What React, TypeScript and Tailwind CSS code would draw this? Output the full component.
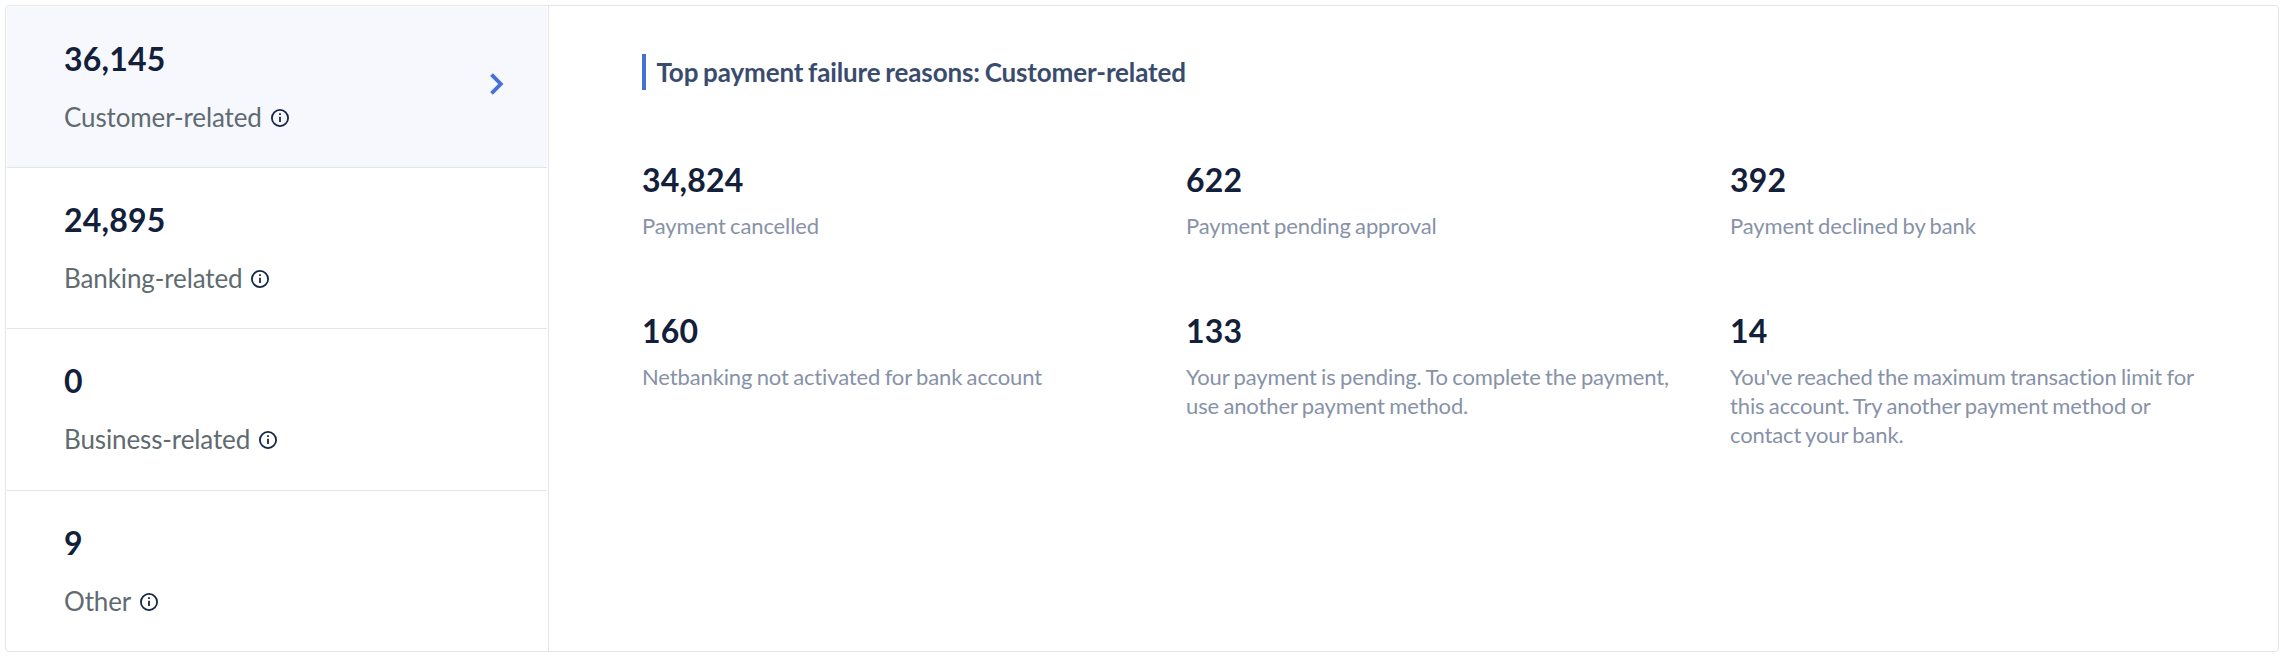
import clsx from "clsx";

type Category = { count: string; label: string; active?: boolean };
type Reason = { count: string; text: string };

const categories: Category[] = [
  { count: "36,145", label: "Customer-related", active: true },
  { count: "24,895", label: "Banking-related" },
  { count: "0", label: "Business-related" },
  { count: "9", label: "Other" },
];

const reasons: Reason[] = [
  { count: "34,824", text: "Payment cancelled" },
  { count: "622", text: "Payment pending approval" },
  { count: "392", text: "Payment declined by bank" },
  { count: "160", text: "Netbanking not activated for bank account" },
  {
    count: "133",
    text: "Your payment is pending. To complete the payment, use another payment method.",
  },
  {
    count: "14",
    text: "You've reached the maximum transaction limit for this account. Try another payment method or contact your bank.",
  },
];

function InfoIcon() {
  return (
    <svg
      className="mt-0.5"
      width="20"
      height="20"
      viewBox="0 0 20 20"
      fill="none"
      stroke="#16264a"
      strokeWidth="1.8"
    >
      <circle cx="10" cy="10" r="8.1" />
      <path d="M10 8.8v5.2" />
      <path d="M10 5.2v1.8" />
    </svg>
  );
}

function ChevronIcon() {
  return (
    <svg
      className="mb-1.5"
      width="14"
      height="22"
      viewBox="0 0 14 22"
      fill="none"
    >
      <path d="M1.5 1.7 10.8 11 1.5 20.3" stroke="#4370d9" strokeWidth="3.8" />
    </svg>
  );
}

function CategoryRow({ count, label, active }: Category) {
  return (
    <button
      className={clsx(
        "flex h-[161.2px] shrink-0 items-center justify-between border-b border-[#e3e5e8] pl-[57px] pr-[43px] text-left last:border-transparent",
        active && "bg-[#f6f8fe]"
      )}
    >
      <div>
        <div className="text-[32px] leading-[39px] font-bold tracking-[0.2px] text-[#12203a]">
          {count}
        </div>
        <div className="mt-[21px] flex items-center gap-2">
          <span className="text-[26px] leading-9 tracking-[-0.12px] text-[#5f6b70]">
            {label}
          </span>
          <InfoIcon />
        </div>
      </div>
      {active && <ChevronIcon />}
    </button>
  );
}

export default function App() {
  return (
    <main className="h-[658px] bg-white pt-[5px] pl-[5px] font-['Lato',sans-serif]">
      <div className="flex h-[647px] w-[2274px] overflow-hidden rounded-sm border border-[#e3e5e8]">
        <nav className="flex w-[543px] shrink-0 flex-col border-r border-[#e3e5e8] px-px pt-px">
          {categories.map((category) => (
            <CategoryRow key={category.label} {...category} />
          ))}
        </nav>
        <section className="flex-1 pt-12 pl-[93px]">
          <h2 className="border-l-4 border-[#4370d9] pl-[10.5px] text-[26px] leading-9 font-bold tracking-[-0.13px] text-[#3a4c6e] [word-spacing:-1.4px]">
            Top payment failure reasons: Customer-related
          </h2>
          <div className="mt-[70px] grid grid-cols-[repeat(3,544px)] gap-y-[71px]">
            {reasons.map((reason) => (
              <div key={reason.count} className="pr-14">
                <div className="text-[32px] leading-10 font-bold tracking-[0.2px] text-[#12203a]">
                  {reason.count}
                </div>
                <p className="mt-[11px] text-[22px] leading-[29px] tracking-[-0.13px] text-[#8792a8] [word-spacing:-1.1px]">
                  {reason.text}
                </p>
              </div>
            ))}
          </div>
        </section>
      </div>
    </main>
  );
}
